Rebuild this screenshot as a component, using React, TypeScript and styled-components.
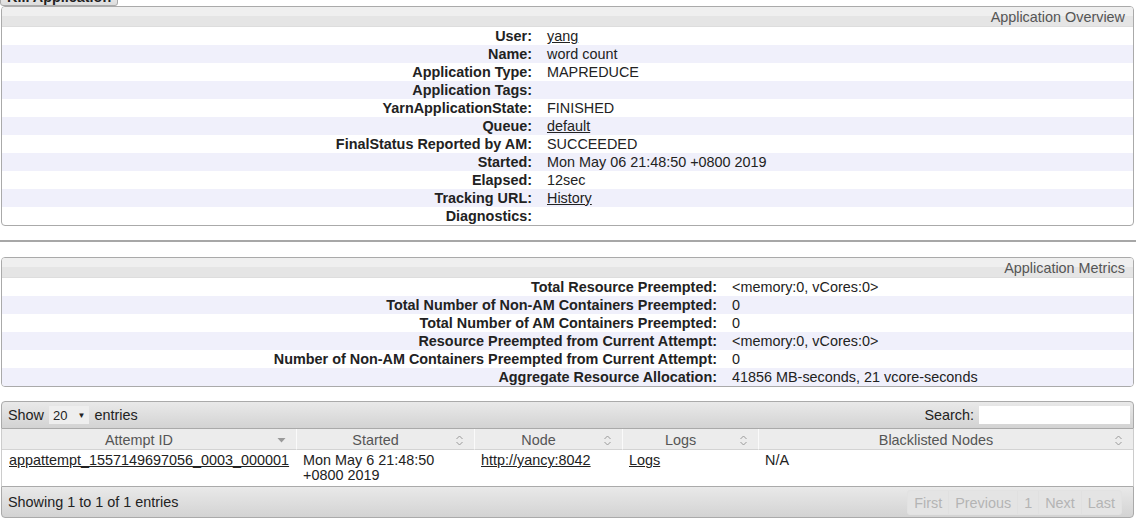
import styled, { createGlobalStyle } from 'styled-components';

const GlobalStyle = createGlobalStyle`
  html, body {
    margin: 0;
    padding: 0;
    background: #ffffff;
    font-family: "Liberation Sans", Arial, sans-serif;
    font-size: 14.4px;
    color: #222;
    overflow: hidden;
  }
`;

const Page = styled.div`
  margin-top: -12px;
  width: 1136px;
  display: flex;
  flex-direction: column;
`;

const KillButton = styled.button`
  align-self: flex-start;
  margin: 0;
  height: 18px;
  line-height: 16px;
  padding: 0 6px;
  font-family: "Liberation Sans", Arial, sans-serif;
  font-size: 14.4px;
  font-weight: bold;
  color: #222;
  background: linear-gradient(#f2f2f2, #dddddd);
  border: 1px solid #aaa;
  border-radius: 0 0 3px 3px;
`;

const InfoBox = styled.div`
  margin: 0 2px 0 1px;
  border: 1px solid #aaa;
  border-radius: 4px;
  overflow: hidden;
`;

const BoxHeader = styled.div`
  height: 19px;
  line-height: 21px;
  padding-right: 8px;
  text-align: right;
  color: #555;
  background: linear-gradient(#efefef 50%, #e5e5e5 50%);
  border-bottom: 1px solid #ddd;
`;

const InfoRows = styled.div`
  display: flex;
  flex-direction: column;
`;

const InfoRow = styled.div<{ $labelWidth: number }>`
  display: grid;
  grid-template-columns: ${(p) => p.$labelWidth}px 1fr;
  height: 18px;
  line-height: 19px;
  &:nth-child(even) {
    background: #f0f0fb;
  }
`;

const Label = styled.div`
  font-weight: bold;
  text-align: right;
  color: #222;
  white-space: nowrap;
`;

const Value = styled.div`
  padding-left: 15px;
  white-space: nowrap;
`;

const Link = styled.a`
  color: #222;
  text-decoration: underline;
`;

const Divider = styled.hr`
  margin: 14px 0 15px 0;
  border: 0;
  border-top: 2px solid #a7a7a7;
  height: 0;
`;

const TableWrap = styled.div`
  margin: 14px 2px 0 1px;
  display: flex;
  flex-direction: column;
`;

const Toolbar = styled.div<{ $bottom?: boolean }>`
  display: flex;
  align-items: center;
  justify-content: space-between;
  height: ${(p) => (p.$bottom ? 30 : 26)}px;
  padding: ${(p) => (p.$bottom ? '0 11px 0 6px' : '0 3px 0 6px')};
  color: #222;
  background: linear-gradient(#e9e9e9, #d3d3d3);
  border: 1px solid #aaa;
  border-radius: ${(p) => (p.$bottom ? '0 0 4px 4px' : '4px 4px 0 0')};
`;

const Controls = styled.div`
  display: flex;
  align-items: center;
  gap: 5px;
`;

const Select = styled.div`
  display: flex;
  align-items: center;
  gap: 10px;
  height: 18px;
  padding: 0 4px 0 4px;
  background: #eeeeee;
  font-size: 13px;
`;

const Caret = styled.span`
  font-size: 8px;
`;

const SearchInput = styled.div`
  width: 151px;
  height: 18px;
  background: #fff;
`;

const Grid = styled.div`
  display: grid;
  grid-template-columns: 294px 178px 148px 136px 1fr;
  border-left: 1px solid #ccc;
  border-right: 1px solid #ccc;
`;

const HeadCell = styled.div`
  position: relative;
  height: 20px;
  line-height: 22px;
  padding-right: 20px;
  text-align: center;
  color: #555;
  background: #ececec;
  border-left: 1px solid #fafafa;
  border-bottom: 1px solid #d3d3d3;
  &:first-child {
    border-left: 0;
  }
`;

const SortIcon = styled.svg`
  position: absolute;
  right: 10px;
  top: 6px;
`;

const Cell = styled.div`
  padding: 3px 7px 0 7px;
  line-height: 15px;
  height: 33px;
`;

const Pager = styled.div`
  display: flex;
  border: 1px solid #e2e2e2;
  border-radius: 3px;
  background: #e4e4e4;
`;

const PageButton = styled.span`
  padding: 0 6px;
  height: 23px;
  line-height: 24px;
  color: #b4b4b4;
  border-left: 1px solid #e0e0e0;
  &:first-child {
    border-left: 0;
  }
`;

const overview: [string, string, boolean?][] = [
  ['User:', 'yang', true],
  ['Name:', 'word count'],
  ['Application Type:', 'MAPREDUCE'],
  ['Application Tags:', ''],
  ['YarnApplicationState:', 'FINISHED'],
  ['Queue:', 'default', true],
  ['FinalStatus Reported by AM:', 'SUCCEEDED'],
  ['Started:', 'Mon May 06 21:48:50 +0800 2019'],
  ['Elapsed:', '12sec'],
  ['Tracking URL:', 'History', true],
  ['Diagnostics:', ''],
];

const metrics: [string, string][] = [
  ['Total Resource Preempted:', '<memory:0, vCores:0>'],
  ['Total Number of Non-AM Containers Preempted:', '0'],
  ['Total Number of AM Containers Preempted:', '0'],
  ['Resource Preempted from Current Attempt:', '<memory:0, vCores:0>'],
  ['Number of Non-AM Containers Preempted from Current Attempt:', '0'],
  ['Aggregate Resource Allocation:', '41856 MB-seconds, 21 vcore-seconds'],
];

const columns = ['Attempt ID', 'Started', 'Node', 'Logs', 'Blacklisted Nodes'];

const SortArrows = ({ sorted }: { sorted?: boolean }) =>
  sorted ? (
    <SortIcon width="9" height="10" viewBox="0 0 9 10">
      <path d="M0.5 3 L8.5 3 L4.5 7.5 Z" fill="#9a9a9a" />
    </SortIcon>
  ) : (
    <SortIcon width="9" height="11" viewBox="0 0 9 11">
      <path d="M1.5 4 L4.5 1 L7.5 4 M1.5 7 L4.5 10 L7.5 7" fill="none" stroke="#9a9a9a" strokeWidth="1" />
    </SortIcon>
  );

export default function App() {
  return (
    <>
      <GlobalStyle />
      <Page>
        <KillButton>Kill Application</KillButton>
        <InfoBox>
          <BoxHeader>Application Overview</BoxHeader>
          <InfoRows>
            {overview.map(([label, value, link]) => (
              <InfoRow key={label} $labelWidth={530}>
                <Label>{label}</Label>
                <Value>{link ? <Link href="#">{value}</Link> : value}</Value>
              </InfoRow>
            ))}
          </InfoRows>
        </InfoBox>
        <Divider />
        <InfoBox>
          <BoxHeader>Application Metrics</BoxHeader>
          <InfoRows>
            {metrics.map(([label, value]) => (
              <InfoRow key={label} $labelWidth={715}>
                <Label>{label}</Label>
                <Value>{value}</Value>
              </InfoRow>
            ))}
          </InfoRows>
        </InfoBox>
        <TableWrap>
          <Toolbar>
            <Controls>
              Show
              <Select>
                20 <Caret>▼</Caret>
              </Select>
              entries
            </Controls>
            <Controls>
              Search:
              <SearchInput />
            </Controls>
          </Toolbar>
          <Grid>
            {columns.map((c, i) => (
              <HeadCell key={c}>
                {c}
                <SortArrows sorted={i === 0} />
              </HeadCell>
            ))}
            <Cell>
              <Link href="#">appattempt_1557149697056_0003_000001</Link>
            </Cell>
            <Cell>
              Mon May 6 21:48:50
              <br />
              +0800 2019
            </Cell>
            <Cell>
              <Link href="#">http://yancy:8042</Link>
            </Cell>
            <Cell>
              <Link href="#">Logs</Link>
            </Cell>
            <Cell>N/A</Cell>
          </Grid>
          <Toolbar $bottom>
            <span>Showing 1 to 1 of 1 entries</span>
            <Pager>
              {['First', 'Previous', '1', 'Next', 'Last'].map((b) => (
                <PageButton key={b}>{b}</PageButton>
              ))}
            </Pager>
          </Toolbar>
        </TableWrap>
      </Page>
    </>
  );
}
